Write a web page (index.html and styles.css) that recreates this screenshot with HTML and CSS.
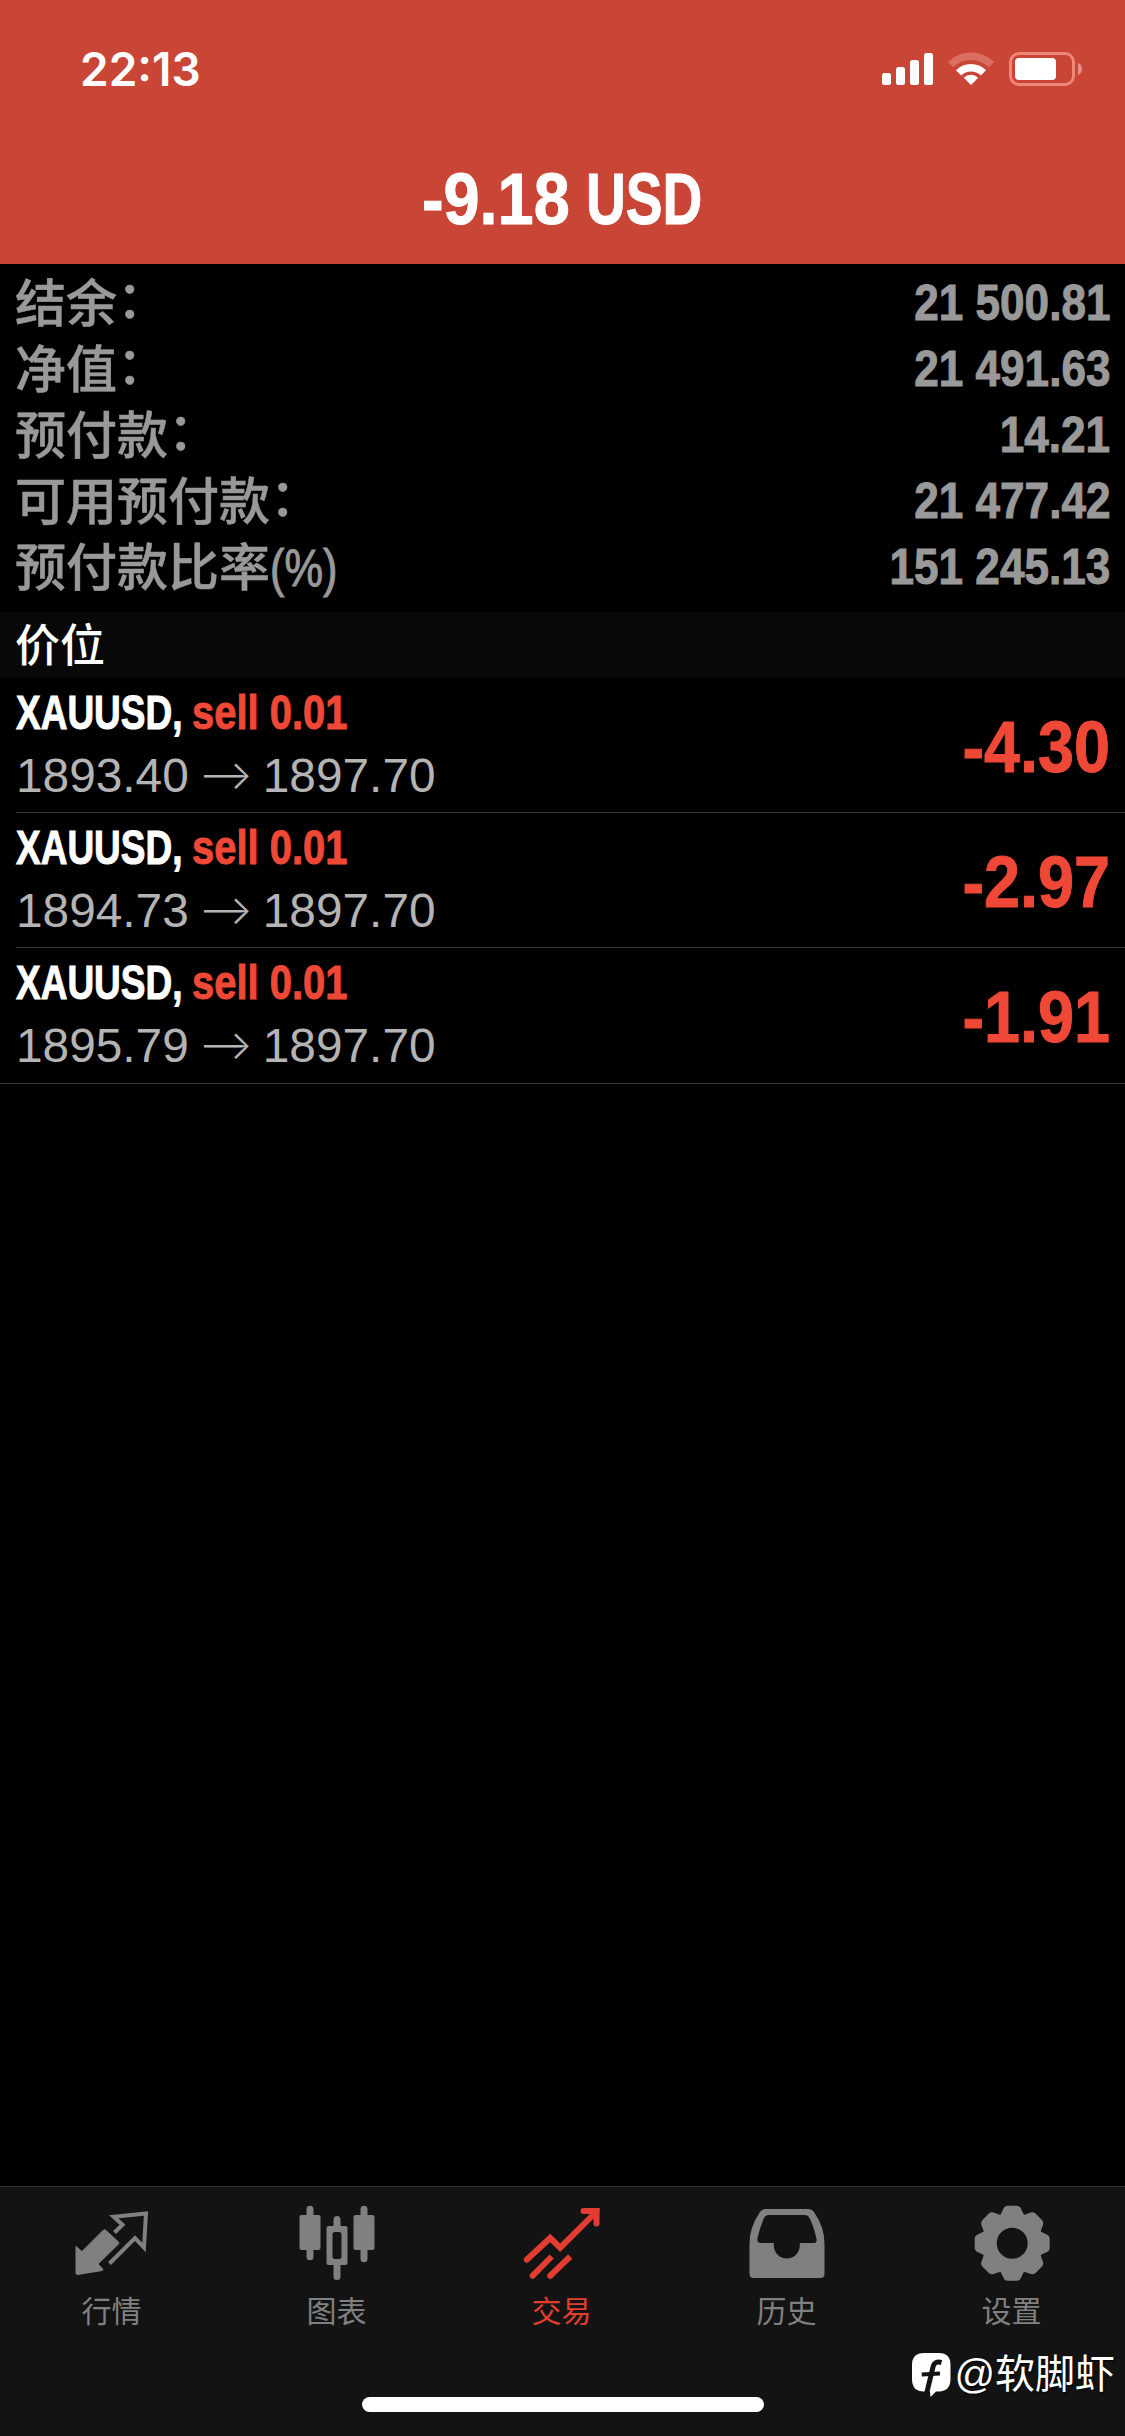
FILE: index.html
```
<!DOCTYPE html>
<html lang="zh-CN">
<head>
<meta charset="utf-8">
<title>交易</title>
<link rel="stylesheet" href="styles.css">
</head>
<body>
<div class="screen">
  <header class="header">
    <div class="status">
      <span class="clock">22:13</span>
      <svg class="status-icons" width="202" height="36" viewBox="0 0 202 36">
        <g fill="#fff">
          <rect x="2" y="22" width="9" height="12" rx="2.5"/>
          <rect x="16" y="16" width="9" height="18" rx="2.5"/>
          <rect x="30" y="9" width="9" height="25" rx="2.5"/>
          <rect x="44" y="2" width="9" height="32" rx="2.5"/>
          <path d="M91 34l-7.2-7.2a10.2 10.2 0 0 1 14.4 0z"/>
          <rect x="135" y="7" width="41" height="22" rx="4"/>
        </g>
        <path d="M78.6 21.8a17.6 17.6 0 0 1 24.8 0" fill="none" stroke="#fff" stroke-width="7.5"/>
        <path d="M70.6 13.6a28.9 28.9 0 0 1 40.8 0" fill="none" stroke="#da6e61" stroke-width="7.5"/>
        <rect x="130.500" y="2.500" width="63" height="31" rx="8.500" fill="none" stroke="#f08677" stroke-width="3"/>
        <path d="M198 12q4 1.500 4 6t-4 6z" fill="#e59287"/>
      </svg>
    </div>
    <h1 class="profit"><span class="profit-value">-9.18</span><span class="profit-unit">USD</span></h1>
  </header>

  <dl class="summary">
    <div class="summary-row"><dt>结余<i>：</i></dt><dd>21 500.81</dd></div>
    <div class="summary-row"><dt>净值<i>：</i></dt><dd>21 491.63</dd></div>
    <div class="summary-row"><dt>预付款<i>：</i></dt><dd>14.21</dd></div>
    <div class="summary-row"><dt>可用预付款<i>：</i></dt><dd>21 477.42</dd></div>
    <div class="summary-row"><dt>预付款比率<b>(%)</b></dt><dd>151 245.13</dd></div>
  </dl>

  <h2 class="section">价位</h2>

  <ul class="positions">
    <li class="position">
      <div class="deal">
        <div class="order"><span class="symbol">XAUUSD,</span><span class="side">sell 0.01</span></div>
        <div class="prices"><span>1893.40</span><span class="arrow">⟶</span><span>1897.70</span></div>
      </div>
      <span class="result">-4.30</span>
    </li>
    <li class="position">
      <div class="deal">
        <div class="order"><span class="symbol">XAUUSD,</span><span class="side">sell 0.01</span></div>
        <div class="prices"><span>1894.73</span><span class="arrow">⟶</span><span>1897.70</span></div>
      </div>
      <span class="result">-2.97</span>
    </li>
    <li class="position">
      <div class="deal">
        <div class="order"><span class="symbol">XAUUSD,</span><span class="side">sell 0.01</span></div>
        <div class="prices"><span>1895.79</span><span class="arrow">⟶</span><span>1897.70</span></div>
      </div>
      <span class="result">-1.91</span>
    </li>
  </ul>

  <nav class="tabs">
    <a class="tab">
      <svg width="80" height="76" viewBox="0 0 80 76">
        <path d="M3 41.500l6 5L30 25.500q1.500-1.500 3 0L45.500 37q1 1 0 2L25 59l5 5.500-.8 1L4.500 69.500Q3 69.500 3 68z" fill="currentColor" stroke="currentColor" stroke-linejoin="round"/>
        <path d="M41.500 27.500l8-7.800-8.800-8L73 8.500 71 42.500l-9-9.500-25.500 25.500" fill="none" stroke="currentColor" stroke-width="4"/>
      </svg>
      <span>行情</span>
    </a>
    <a class="tab">
      <svg width="80" height="76" viewBox="0 0 80 76" fill="currentColor">
        <rect x="1.500" y="10" width="21" height="35" rx="2"/>
        <rect x="8.500" y="0.700" width="7" height="54.500" rx="3.500"/>
        <rect x="55.500" y="10" width="21" height="35" rx="2"/>
        <rect x="62.500" y="0.700" width="7" height="56.500" rx="3.500"/>
        <path fill-rule="evenodd" d="M30.500 21h17q2 0 2 2v35q0 2-2 2h-17q-2 0-2-2V23q0-2 2-2zM37 27q-2.500 0-2.500 2.500v22q0 2.500 2.500 2.500h4q2.500 0 2.500-2.500v-22q0-2.500-2.500-2.500z"/>
        <path d="M35.500 22v-7.500a3.500 3.500 0 0 1 7 0V22zM35.500 59v12.500a3.500 3.500 0 0 0 7 0V59z"/>
      </svg>
      <span>图表</span>
    </a>
    <a class="tab tab-active">
      <svg width="80" height="76" viewBox="0 0 80 76" fill="none" stroke="currentColor" stroke-width="6">
        <path d="M4.500 54l-.7.700" stroke-linecap="round"/>
        <path d="M4 54.500L27.200 33l10 9.700L73 7"/>
        <path d="M60.500 6h13v12.500" stroke-linecap="round"/>
        <path d="M70 3h6.500v6z" fill="currentColor" stroke="none"/>
        <path d="M10 70.500l-.3.300M27.500 70.500l-.3.300" stroke-linecap="round"/>
        <path d="M9.700 70.700L28.700 51.500M27.300 70.700L47.200 51.500"/>
      </svg>
      <span>交易</span>
    </a>
    <a class="tab">
      <svg width="80" height="76" viewBox="0 0 80 76">
        <path fill="currentColor" fill-rule="evenodd" d="M18 4H60q4 0 6 3 10.500 15 10.500 32V69q0 4-4 4H5.500q-4 0-4-4V39Q1.500 22 12 7q2-3 6-3zM21 10q-3.500 0-5 3-4 9-6.500 20-.8 5 3.500 5H25.800v2.500a13 13 0 0 0 26 0V38H65q4.300 0 3.500-4-2.500-12-7-21-1.500-3-5-3z"/>
      </svg>
      <span>历史</span>
    </a>
    <a class="tab">
      <svg width="80" height="76" viewBox="0 0 80 76">
        <defs>
          <path id="tooth" d="M-13-26L-9.500-33Q-8-37.500-4.500-37.500H4.500Q8-37.500 9.500-33L13-26z"/>
        </defs>
        <g transform="translate(39.200 38.300)" fill="currentColor">
          <circle r="23" fill="none" stroke="currentColor" stroke-width="15"/>
          <use href="#tooth"/>
          <use href="#tooth" transform="rotate(45)"/>
          <use href="#tooth" transform="rotate(90)"/>
          <use href="#tooth" transform="rotate(135)"/>
          <use href="#tooth" transform="rotate(180)"/>
          <use href="#tooth" transform="rotate(225)"/>
          <use href="#tooth" transform="rotate(270)"/>
          <use href="#tooth" transform="rotate(315)"/>
        </g>
      </svg>
      <span>设置</span>
    </a>
  </nav>

  <div class="home-bar"></div>

  <div class="watermark">
    <svg width="40" height="46" viewBox="0 0 40 46">
      <path fill="#fff" d="M12 0H27Q38.500 0 38.500 12V26Q38.500 38 27 38.500H24L18.500 44 18 38.500H12Q0 38.500 0 26V12Q0 0 12 0z"/>
      <path fill="none" stroke="#131313" stroke-width="5" d="M29.500 9.500Q22.500 7.500 21 14L14.500 41"/>
      <path fill="none" stroke="#131313" stroke-width="4" d="M9.700 21.500L28 20.500"/>
    </svg>
    <span>@软脚虾</span>
  </div>
</div>
</body>
</html>
```
FILE: styles.css
```
* {
  box-sizing: border-box;
  margin: 0;
  padding: 0;
}

body {
  background: #000;
}

.screen {
  position: relative;
  display: flex;
  flex-direction: column;
  width: 1125px;
  height: 2436px;
  background: #000;
  color: #fff;
  font-family: "Liberation Sans", "Noto Sans CJK SC", sans-serif;
  white-space: nowrap;
  overflow: hidden;
}

.header {
  height: 264px;
  background: #c94536;
}

.status {
  display: flex;
  justify-content: space-between;
  align-items: center;
  height: 138px;
  padding: 0 43px 0 80px;
}

.clock {
  font: 570 46px Inter, sans-serif;
}

/* Condensed numerals and captions */
.profit-value,
.profit-unit,
.summary dd,
.symbol,
.side,
.result {
  display: block;
  font-weight: 700;
  transform-origin: left;
  -webkit-text-stroke: 1px currentColor;
}

.profit {
  display: flex;
  justify-content: center;
  font-size: 72px;
  line-height: 122px;
}

.profit-value {
  width: 164px;
  transform: scaleX(0.9);
}

.profit-unit {
  width: 118px;
  transform: scaleX(0.765);
}

.summary {
  height: 348px;
  padding: 6px 15px 0;
  color: #999;
}

.summary-row {
  display: flex;
  justify-content: space-between;
  height: 66px;
  line-height: 66px;
}

.summary dt {
  display: flex;
  font-weight: 500;
  font-size: 51px;
  line-height: 70px;
  -webkit-text-stroke: 0.500px currentColor;
}

.summary i {
  font-style: normal;
  line-height: 62px;
}

.summary b {
  font-weight: 500;
  line-height: 69px;
  -webkit-text-stroke: 1px currentColor;
  transform: scaleX(0.85);
  transform-origin: left;
}

.summary dd {
  font-size: 50px;
  line-height: 67px;
  transform: scaleX(0.882);
  transform-origin: right;
}

.section {
  height: 66px;
  padding-left: 15px;
  background: #080808;
  font-weight: 500;
  font-size: 45px;
  line-height: 70px;
}

.positions {
  flex: 1;
  list-style: none;
}

.position {
  display: flex;
  justify-content: space-between;
  height: 135px;
  margin-left: 16px;
  padding-right: 15px;
  border-bottom: 1px solid #333;
}

.position:last-child {
  height: 136px;
  margin-left: 0;
  padding-left: 16px;
}

.deal {
  padding-top: 4px;
}

.order {
  display: flex;
  font-size: 49px;
  line-height: 60px;
}

.symbol {
  width: 176px;
  transform: scaleX(0.755);
}

.side,
.result {
  color: #ef4837;
}

.side {
  transform: scaleX(0.815);
}

.prices {
  display: flex;
  margin-top: 2px;
  color: #b4b4b4;
  font-size: 47.800px;
  line-height: 64px;
}

.arrow {
  width: 74px;
  font: 350 40px/61px Inter, sans-serif;
  text-align: center;
}

.result {
  font-size: 71.500px;
  line-height: 138px;
  transform: scaleX(0.905);
  transform-origin: right;
}

.tabs {
  display: grid;
  grid-template-columns: repeat(5, 1fr);
  height: 250px;
  padding-top: 18px;
  border-top: 1px solid #2e2e2e;
  background: #131313;
}

.tab {
  display: flex;
  flex-direction: column;
  align-items: center;
  color: #808080;
  font: 400 30px/44px "Noto Sans CJK SC", sans-serif;
}

.tab svg {
  margin-bottom: 6px;
}

.tab span {
  padding-right: 2px;
}

.tab-active {
  color: #e23d30;
}

.home-bar {
  position: absolute;
  left: 362px;
  bottom: 24px;
  width: 402px;
  height: 15px;
  border-radius: 8px;
  background: #fff;
}

.watermark {
  position: absolute;
  right: 10px;
  bottom: 29px;
  display: flex;
  align-items: center;
  gap: 2px;
  font-size: 40px;
  line-height: 60px;
  text-shadow: 1px 1px 2px #000;
}

.watermark span {
  padding-bottom: 3px;
}
```
